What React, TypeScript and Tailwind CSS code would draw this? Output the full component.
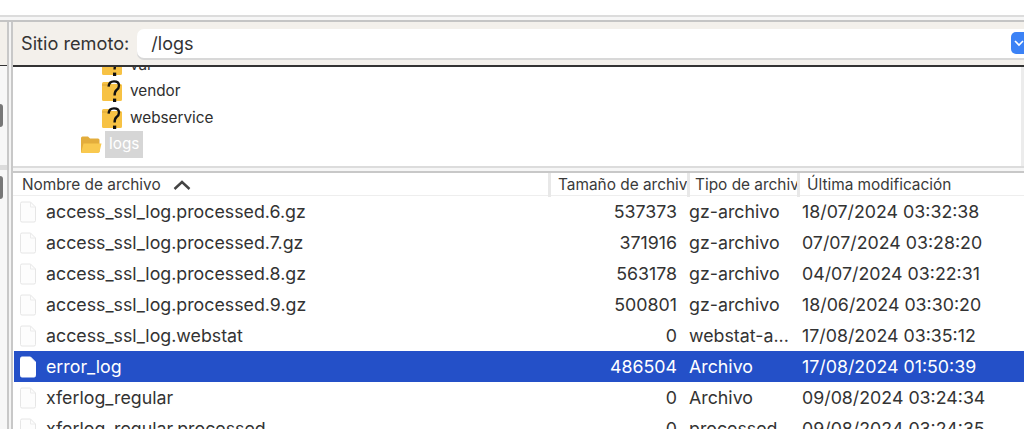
const font = "font-['Inter','Liberation_Sans',sans-serif]";

const files = [
  { name: "access_ssl_log.processed.6.gz", size: "537373", type: "gz-archivo", date: "18/07/2024 03:32:38" },
  { name: "access_ssl_log.processed.7.gz", size: "371916", type: "gz-archivo", date: "07/07/2024 03:28:20" },
  { name: "access_ssl_log.processed.8.gz", size: "563178", type: "gz-archivo", date: "04/07/2024 03:22:31" },
  { name: "access_ssl_log.processed.9.gz", size: "500801", type: "gz-archivo", date: "18/06/2024 03:30:20" },
  { name: "access_ssl_log.webstat", size: "0", type: "webstat-a...", date: "17/08/2024 03:35:12" },
  { name: "error_log", size: "486504", type: "Archivo", date: "17/08/2024 01:50:39", selected: true },
  { name: "xferlog_regular", size: "0", type: "Archivo", date: "09/08/2024 03:24:34" },
  { name: "xferlog_regular.processed", size: "0", type: "processed", date: "09/08/2024 03:24:35" },
];

function UnknownFolder() {
  return (
    <svg width="22" height="23" viewBox="0 0 22 23" className="shrink-0">
      <path d="M1 3.5 Q1 2 2.5 2 H8 L10 4 H19.5 Q21 4 21 5.5 V19.5 Q21 21 19.5 21 H2.5 Q1 21 1 19.5 Z" fill="#f7c244" />
      <path d="M1 5 H9 L10 4" fill="none" stroke="#d9a43a" strokeWidth="1" />
      <path
        d="M7.6 6.6 Q8 1.4 13 1.4 Q18 1.4 18 5.6 Q18 8.4 15.6 10 Q13.6 11.4 13.6 15.6"
        fill="none"
        stroke="#111"
        strokeWidth="2.4"
      />
      <rect x="12" y="18.6" width="3.2" height="3.4" fill="#111" />
    </svg>
  );
}

function OpenFolder() {
  return (
    <svg width="22" height="20" viewBox="0 0 22 20" className="shrink-0">
      <path d="M1 3 Q1 1.5 2.5 1.5 H8 L10 3.5 H18 Q19.5 3.5 19.5 5 V17 H1 Z" fill="#e3ad3c" />
      <path d="M1 18 L3.5 8.5 H21.5 L19.5 17 Q19.3 18 18 18 Z" fill="#f9c94f" />
    </svg>
  );
}

function FileIcon({ selected }: { selected?: boolean }) {
  return (
    <svg width="18" height="22" viewBox="0 0 18 22" className="shrink-0">
      <path
        d="M1.5 2.5 Q1.5 1 3 1 H11.5 L16.5 6 V19.5 Q16.5 21 15 21 H3 Q1.5 21 1.5 19.5 Z"
        fill={selected ? "#ffffff" : "#fdfdfd"}
        stroke={selected ? "#ffffff" : "#e6e6e6"}
        strokeWidth="1"
      />
      {!selected && <path d="M11.5 1 V6 H16.5" fill="none" stroke="#ececec" strokeWidth="1" />}
    </svg>
  );
}

function TreeRow({ label, indent, children, active }: { label: string; indent: string; children: React.ReactNode; active?: boolean }) {
  return (
    <div className={`flex h-[26.5px] items-center ${indent}`}>
      {children}
      {active ? (
        <span className="ml-[3px] flex h-[27px] items-center bg-[#d6d6d6] px-[4px] text-white">{label}</span>
      ) : (
        <span className="ml-[7px] text-[#2f2f2f]">{label}</span>
      )}
    </div>
  );
}

export default function App() {
  return (
    <div className={`${font} flex h-[429px] w-[1024px] flex-col overflow-hidden bg-white text-[15px]`}>
      {/* Top of the window */}
      <div className="h-[15px] shrink-0 bg-white" />
      <div className="h-[2px] shrink-0 bg-[#dcdcdc]" />
      <div className="h-[3px] shrink-0 bg-[#f6f6f6]" />
      <div className="h-[2px] shrink-0 bg-[#c4c4c4]" />

      <div className="flex min-h-0 flex-1">
        {/* Local pane, only its edge shows */}
        <div className="flex w-[7px] shrink-0 flex-col bg-[#f7f7f7]">
          <div className="h-[43px] shrink-0 bg-[#f3f0eb]" />
          <div className="h-[1px] shrink-0 bg-[#333]" />
          <div className="mt-[38px] h-[23px] w-[3px] rounded-r-sm bg-[#777]" />
          <div className="mt-[38px] h-[5px] bg-[#dcdcdc]" />
          <div className="mt-[6px] h-[23px] w-[3px] rounded-r-sm bg-[#777]" />
        </div>

        {/* Splitter */}
        <div className="flex w-[6px] shrink-0">
          <div className="w-[2px] bg-[#c8c8c8]" />
          <div className="w-[2px] bg-[#f4f4f4]" />
          <div className="w-[2px] bg-[#c8c8c8]" />
        </div>

        {/* Remote pane */}
        <div className="flex min-w-0 flex-1 flex-col">
          <div className="flex h-[43px] shrink-0 items-center bg-[#f3f0eb] pl-[8px]">
            <span className="text-[18.2px] text-[#333]">Sitio remoto:</span>
            <div className="relative ml-[8px] flex h-[29px] flex-1 items-center rounded-l-[7px] bg-white pl-[14px] text-[18px] text-[#333] shadow-[0_2px_0_#d8d8d8]">
              /logs
              <div className="absolute right-0 top-[3px] flex h-[22px] w-[13px] items-center rounded-l-[5px] bg-[#3b82f6] pl-[3px]">
                <svg width="10" height="8" viewBox="0 0 10 8">
                  <path d="M1 2 L5 6 L9 2" fill="none" stroke="#fff" strokeWidth="1.6" />
                </svg>
              </div>
            </div>
          </div>
          <div className="h-[2px] shrink-0 bg-[#333]" />

          {/* Directory tree */}
          <div className="h-[99px] shrink-0 overflow-hidden border-r-[3px] border-[#ececec] bg-white text-[15.3px]">
            <div className="-mt-[15px]">
              <TreeRow label="var" indent="pl-[88px]">
                <UnknownFolder />
              </TreeRow>
              <TreeRow label="vendor" indent="pl-[88px]">
                <UnknownFolder />
              </TreeRow>
              <TreeRow label="webservice" indent="pl-[88px]">
                <UnknownFolder />
              </TreeRow>
              <TreeRow label="logs" indent="pl-[67px]" active>
                <OpenFolder />
              </TreeRow>
            </div>
          </div>

          <div className="h-[2px] shrink-0 bg-[#dcdcdc]" />
          <div className="h-[3px] shrink-0 bg-[#f6f6f6]" />
          <div className="h-[2px] shrink-0 bg-[#c8c8c8]" />

          {/* Column headers */}
          <div className="flex h-[23px] shrink-0 items-center border-b border-[#eeeeee] pt-[2px] text-[15.4px] text-[#3a3a3a]">
            <div className="flex w-[538px] items-center border-r-[3px] border-[#e8e8e8] pl-[9px]">
              Nombre de archivo
              <svg width="18" height="11" viewBox="0 0 18 11" className="ml-[12px]">
                <path d="M1.5 9 L9 2 L16.5 9" fill="none" stroke="#444" strokeWidth="2.4" />
              </svg>
            </div>
            <div className="w-[139px] whitespace-nowrap border-r-[3px] border-[#e8e8e8] pl-[7px]">
              <span className="block w-[129px] overflow-hidden">Tamaño de archivo</span>
            </div>
            <div className="w-[110px] whitespace-nowrap border-r-[3px] border-[#e8e8e8] pl-[5px]">
              <span className="block w-[102px] overflow-hidden">Tipo de archivo</span>
            </div>
            <div className="pl-[7px]">Última modificación</div>
          </div>

          {/* File rows */}
          <div className="min-h-0 flex-1 overflow-hidden text-[17.8px] text-[#333]">
            {files.map((f) => (
              <div
                key={f.name}
                className={`ml-px flex h-[31px] items-center ${f.selected ? "bg-[#2450c8] text-white" : ""}`}
              >
                <div className="flex w-[536px] items-center pl-[5px]">
                  <FileIcon selected={f.selected} />
                  <span className="ml-[9px] pt-px">{f.name}</span>
                </div>
                <div className="w-[127px] pt-px text-right">{f.size}</div>
                <div className="ml-[12px] w-[113px] whitespace-nowrap pt-px">{f.type}</div>
                <div className="whitespace-nowrap pt-px">{f.date}</div>
              </div>
            ))}
          </div>
        </div>
      </div>
    </div>
  );
}
